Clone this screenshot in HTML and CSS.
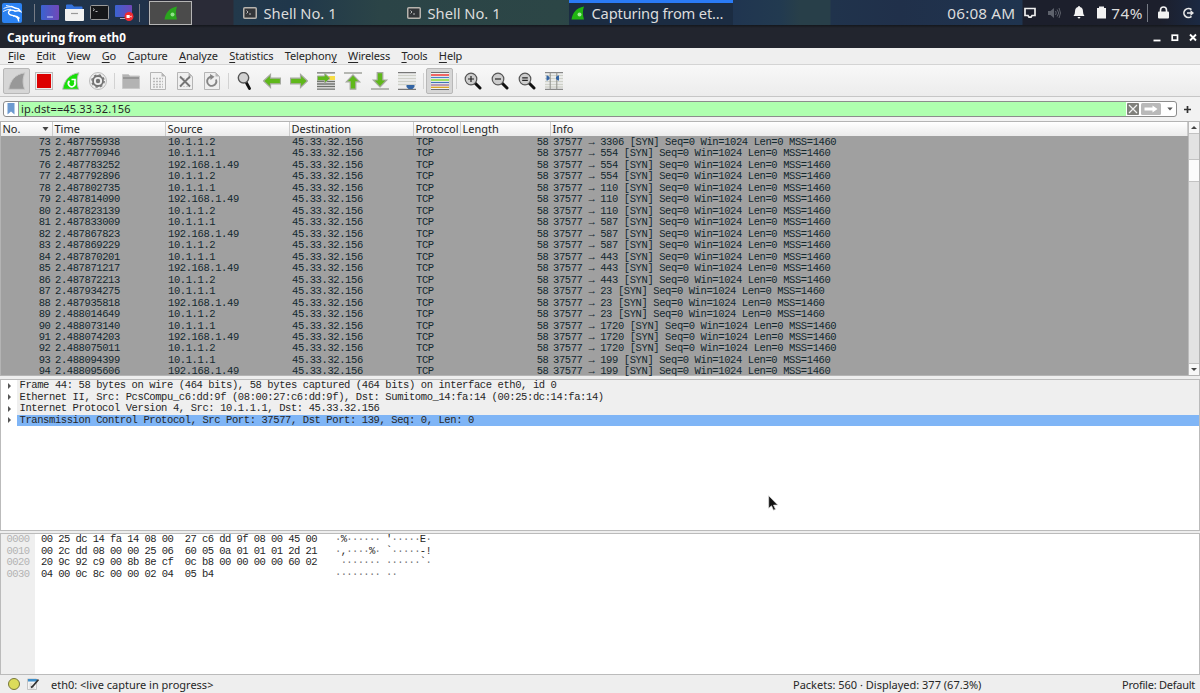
FILE: index.html
```html
<!DOCTYPE html>
<html lang="en">

<head>
    <meta charset="UTF-8">
    <meta name="viewport" content="width=device-width, initial-scale=1.0">
    <title>Capturing from eth0</title>
    <link rel="stylesheet" href="styles.css">
</head>

<body>
    <!-- desktop panel -->
    <div class="panel">
        <div class="launchers">
            <svg class="kali" width="20" height="20" viewBox="0 0 20 20">
                <rect width="20" height="20" rx="2" fill="#2b82f2" />
                <path d="M1.500 5.500 5 4.200l4-.5M1 8.500l4-1.700 4-.6M4 2.500l5 1" fill="none" stroke="#fff" stroke-width=".9" />
                <path d="M9 3.500c2 0 3 1.500 5 1.800l2.500.5 2 2.700-2.500-.8-3.500.5M13 8c-3-1.500-6.500-1-6.500 1.500 0 2.500 3 2.800 5.500 3.300 3 .7 4.500 2.500 4.700 5.700M11 13c3-.3 5 .5 6.500 2.500" fill="none" stroke="#fff" stroke-width="1.400" />
            </svg>
            <i class="line"></i>
            <svg width="18" height="15" viewBox="0 0 18 15">
                <defs>
                    <linearGradient id="desk" x1="0" y1="0" x2="1" y2="0">
                        <stop offset="0" stop-color="#3a63d0" />
                        <stop offset="1" stop-color="#7148b8" />
                    </linearGradient>
                </defs>
                <rect width="18" height="15" rx="1" fill="url(#desk)" />
                <path d="M6 12h6" stroke="#c9d4ff" stroke-width="1" />
            </svg>
            <svg width="19" height="17" viewBox="0 0 19 17">
                <path d="M1 6V1.500Q1 .5 2 .5h5l2 2h7.500q1 0 1 1V6z" fill="#3572dc" />
                <path d="M0 5h19v11q0 1-1 1H1q-1 0-1-1z" fill="#f1f1f1" />
                <path d="M6 9.500h7" stroke="#999" stroke-width="1.200" />
            </svg>
            <svg width="19" height="15" viewBox="0 0 19 15">
                <rect x=".5" y=".5" width="18" height="14" rx="1" fill="#161719" stroke="#9a9a9a" />
                <path d="M3 3.500l1.500 1.200L3 6M5.500 6.500h2" fill="none" stroke="#ddd" stroke-width=".8" />
            </svg>
            <svg width="19" height="17" viewBox="0 0 19 17">
                <rect y="1" width="17" height="12" rx="1" fill="url(#desk)" />
                <path d="M5 14.500h5" stroke="#aab" stroke-width="1" />
                <circle cx="14" cy="12.500" r="4.500" fill="#f02a30" />
                <path d="M11.500 11h3.200v3h-3.200zM15 12.500l1.500-1v2z" fill="#fff" />
            </svg>
            <i class="line last"></i>
        </div>
        <div class="workspace">
            <svg width="14" height="14" viewBox="0 0 14 14">
                <path d="M.5 13.500C1.500 7 5 2 13 .5c-1.500 4-1.500 8 0 13z" fill="#2aa51e" />
                <circle cx="8.500" cy="8.500" r="2" fill="#8fe08a" />
            </svg>
        </div>
        <div class="task">
            <svg width="14" height="12" viewBox="0 0 14 12">
                <rect x=".75" y=".75" width="12.500" height="10.500" rx="1" fill="#333639" stroke="#b7b4ae" stroke-width="1.500" />
                <path d="M3.500 3.500 5 5 3.500 6.500M6 7h2" fill="none" stroke="#ddd" stroke-width=".8" />
            </svg>
            <span>Shell No. 1</span>
        </div>
        <div class="task second">
            <svg width="14" height="12" viewBox="0 0 14 12">
                <rect x=".75" y=".75" width="12.500" height="10.500" rx="1" fill="#333639" stroke="#b7b4ae" stroke-width="1.500" />
                <path d="M3.500 3.500 5 5 3.500 6.500M6 7h2" fill="none" stroke="#ddd" stroke-width=".8" />
            </svg>
            <span>Shell No. 1</span>
        </div>
        <div class="task current">
            <svg width="14" height="14" viewBox="0 0 14 14">
                <path d="M.5 13.500C1.500 7 5 2 13 .5c-1.500 4-1.500 8 0 13z" fill="#20b512" />
                <circle cx="8.500" cy="8.500" r="2" fill="#a6eaa0" />
            </svg>
            <span>Capturing from et...</span>
        </div>
        <div class="tray">
            <span class="clock">06:08 AM</span>
            <svg class="t-net" width="12" height="12" viewBox="0 0 12 12">
                <path d="M1 1.500h10v7H8l-1 1.700H5L4 8.500H1z" fill="none" stroke="#eee" stroke-width="1.700" />
            </svg>
            <svg class="t-vol" width="13" height="12" viewBox="0 0 13 12">
                <path d="M0 4h2.500L6 1v10L2.500 8H0z" fill="#5e626c" />
                <path d="M7.500 4q1.500 2 0 4M9.200 2.500q3 3.500 0 7M11 1q3 5 0 10" fill="none" stroke="#5e626c" />
            </svg>
            <svg class="t-bell" width="12" height="13" viewBox="0 0 12 13">
                <path d="M6 0q1 0 1 1 3 .8 3 4.500 0 3 1.500 4.500H.5Q2 8.500 2 5.500 2 1.800 5 1q0-1 1-1zM4.500 11h3q-.5 1.500-1.500 1.500T4.500 11z" fill="#f2f2f2" />
            </svg>
            <svg class="t-bat" width="9" height="13" viewBox="0 0 9 13">
                <path d="M0 2h2V.5h5V2h2v10.500H0z" fill="#f2f2f2" />
            </svg>
            <span class="charge">74%</span>
            <i class="line"></i>
            <svg class="t-lock" width="11" height="13" viewBox="0 0 11 13">
                <rect y="5.500" width="11" height="7" rx="1" fill="#f2f2f2" />
                <path d="M2.500 6V4a3 3 0 0 1 6 0v2" fill="none" stroke="#f2f2f2" stroke-width="1.600" />
            </svg>
            <svg class="t-out" width="12" height="12" viewBox="0 0 12 12">
                <path d="M9.500 2.700A4.500 4.500 0 1 0 9.500 9.300M5 6h5" fill="none" stroke="#e8e8e8" stroke-width="1.700" />
                <path d="M8.500 3 12 6 8.500 9z" fill="#e8e8e8" />
            </svg>
        </div>
    </div>

    <div class="titlebar">
        <span>Capturing from eth0</span>
        <div class="win-btns">
            <svg width="8" height="9" viewBox="0 0 8 9"><path d="M.5 7.500h7" stroke="#fff" stroke-width="1.800" /></svg>
            <svg width="8" height="9" viewBox="0 0 8 9"><rect x="1.200" y="2.200" width="5.300" height="5" fill="none" stroke="#fff" stroke-width="1.700" /></svg>
            <svg width="8" height="9" viewBox="0 0 8 9"><path d="M1 1.500l6 6M7 1.500l-6 6" stroke="#fff" stroke-width="1.900" /></svg>
        </div>
    </div>

    <div class="menubar">
        <span><u>F</u>ile</span>
        <span><u>E</u>dit</span>
        <span><u>V</u>iew</span>
        <span><u>G</u>o</span>
        <span><u>C</u>apture</span>
        <span><u>A</u>nalyze</span>
        <span><u>S</u>tatistics</span>
        <span>Telephon<u>y</u></span>
        <span><u>W</u>ireless</span>
        <span><u>T</u>ools</span>
        <span><u>H</u>elp</span>
    </div>

    <div class="toolbar">
        <div class="tool pressed">
            <svg viewBox="0 0 18 18"><path d="M.7 17.300C2 9 7 2 17 .8c-2.500 5-2.500 11-.3 16.500z" fill="#989898" stroke="#c9c9c9" /></svg>
        </div>
        <div class="tool">
            <svg viewBox="0 0 18 18"><rect x=".5" y=".5" width="17" height="17" fill="#eee" stroke="#bbb" /><rect x="2" y="2" width="14" height="14" fill="#dc0000" /></svg>
        </div>
        <div class="tool">
            <svg viewBox="0 0 18 18"><path d="M.7 17.300C2 9 7 2 17 .8c-2.500 5-2.500 11-.3 16.500z" fill="#18e008" stroke="#bbb" /><path d="M7.500 9a3.300 3.300 0 1 0 5 .7M9.500 7.500h3.500v3.500" fill="none" stroke="#fff" stroke-width="1.700" /></svg>
        </div>
        <div class="tool">
            <svg viewBox="0 0 18 18"><circle cx="9" cy="9" r="8.500" fill="#eee" stroke="#bbb" /><circle cx="9" cy="9" r="5" fill="none" stroke="#737373" stroke-width="1.800" /><circle cx="9" cy="9" r="6.200" fill="none" stroke="#737373" stroke-width="1.300" stroke-dasharray="2.400 2.470" /><circle cx="9" cy="9" r="2.200" fill="#737373" /></svg>
        </div>
        <i class="sep"></i>
        <div class="tool">
            <svg viewBox="0 0 18 18"><path d="M.5 16.500v-14h6l1.500 1.500h9.500v12.500z" fill="#b3b3b3" stroke="#c8c8c8" /><path d="M1 6h16" stroke="#8b8b8b" stroke-width="1.500" /></svg>
        </div>
        <div class="tool">
            <svg viewBox="0 0 18 18"><path d="M1.500 .5h11l4 4v13h-15z" fill="#f2f2f2" stroke="#b5b5b5" /><path d="M12.500.5v4h4z" fill="#b5b5b5" /><path d="M4 6.500h10M4 9.500h10M4 12.500h10M4 15h10" stroke="#bababa" stroke-width="1.500" stroke-dasharray="2 1" /></svg>
        </div>
        <div class="tool">
            <svg viewBox="0 0 18 18"><path d="M1.500 .5h11l4 4v13h-15z" fill="#efefef" stroke="#b5b5b5" /><path d="M12.500.5v4h4z" fill="#b5b5b5" /><path d="M4 6.500h10M4 14.500h10" stroke="#ccc" stroke-dasharray="2 1" /><path d="M4 4.500l10 10M14 4.500l-10 10" stroke="#757575" stroke-width="1.900" /></svg>
        </div>
        <div class="tool">
            <svg viewBox="0 0 18 18"><path d="M1.500 .5h11l4 4v13h-15z" fill="#efefef" stroke="#b5b5b5" /><path d="M12.500.5v4h4z" fill="#b5b5b5" /><path d="M13 7.500a4.600 4.600 0 1 1-4.500-2.800" fill="none" stroke="#858585" stroke-width="1.900" /><path d="M7 2l4.500 2.700L7.500 8z" fill="#858585" /></svg>
        </div>
        <i class="sep"></i>
        <div class="tool">
            <svg viewBox="0 0 18 18"><path d="M10.500 11l3 5.500" stroke="#111" stroke-width="2.800" stroke-linecap="round" /><circle cx="7.500" cy="5.800" r="5.200" fill="#d2d2d2" stroke="#555" stroke-width="1.400" /></svg>
        </div>
        <div class="tool">
            <svg viewBox="0 0 18 18"><path d="M.5 9 7.500 2.500v3.700h10v5.600h-10v3.700z" fill="#5fb81a" stroke="#a5a99f" stroke-width="1.200" /></svg>
        </div>
        <div class="tool">
            <svg viewBox="0 0 18 18"><path d="M17.500 9l-7-6.500v3.700H.5v5.600h10v3.700z" fill="#5fb81a" stroke="#a5a99f" stroke-width="1.200" /></svg>
        </div>
        <div class="tool">
            <svg viewBox="0 0 18 18"><path d="M0 .8h18M0 9.500h18M0 12h18M0 14.500h18M0 17.200h18" stroke="#6f716d" stroke-width="1.300" /><path d="M10 4h8v4h-8z" fill="#f6dc45" /><path d="M13 6.300l-5.300-5v2.700H.3v4.600h7.400v2.700z" fill="#5fb81a" stroke="#a5a99f" /></svg>
        </div>
        <div class="tool">
            <svg viewBox="0 0 18 18"><path d="M0 1h18" stroke="#a5a8a2" stroke-width="1.600" /><path d="M9 2.800l6.700 7h-3.900v7.400H6.200V9.800H2.300z" fill="#5fb81a" stroke="#a5a99f" stroke-width="1.200" /></svg>
        </div>
        <div class="tool">
            <svg viewBox="0 0 18 18"><path d="M0 17h18" stroke="#a5a8a2" stroke-width="1.600" /><path d="M9 15l6.700-7h-3.900V.7H6.200V8H2.300z" fill="#5fb81a" stroke="#a5a99f" stroke-width="1.200" /></svg>
        </div>
        <div class="tool">
            <svg viewBox="0 0 18 18"><path d="M0 3.500h18M0 6.500h18M0 9.500h18M0 12.500h18" stroke="#cfd1c9" stroke-width="1.300" /><path d="M0 .7h18M0 17.300h18" stroke="#777" stroke-width="1.300" /><path d="M8.500 13h8v2l-2 2h-4l-2-2z" fill="#3465a4" /></svg>
        </div>
        <i class="sep"></i>
        <div class="tool pressed">
            <svg viewBox="0 0 18 18"><path d="M0 0h18v18H0z" fill="#f1f1ee" /><path d="M0 .5h18M0 17.500h18" stroke="#707070" /><path d="M0 3h18" stroke="#ef2929" stroke-width="1.400" /><path d="M0 5.500h18" stroke="#4a7fc4" stroke-width="1.200" /><path d="M0 8h18" stroke="#7ddc28" stroke-width="1.400" /><path d="M0 10.500h18" stroke="#3f74b8" stroke-width="1.200" /><path d="M0 13h18" stroke="#9a73a5" stroke-width="1.400" /><path d="M0 15.300h18" stroke="#d9a01e" stroke-width="1.300" /></svg>
        </div>
        <i class="sep"></i>
        <div class="tool">
            <svg viewBox="0 0 18 18"><path d="M11 11l5 5" stroke="#111" stroke-width="3" stroke-linecap="round" /><circle cx="7" cy="7" r="5.800" fill="#cdcdcd" stroke="#555" stroke-width="1.200" /><path d="M4 7h6M7 4v6" stroke="#222" stroke-width="1.200" /></svg>
        </div>
        <div class="tool">
            <svg viewBox="0 0 18 18"><path d="M11 11l5 5" stroke="#111" stroke-width="3" stroke-linecap="round" /><circle cx="7" cy="7" r="5.800" fill="#cdcdcd" stroke="#555" stroke-width="1.200" /><path d="M4 7h6" stroke="#222" stroke-width="1.200" /></svg>
        </div>
        <div class="tool">
            <svg viewBox="0 0 18 18"><path d="M11 11l5 5" stroke="#111" stroke-width="3" stroke-linecap="round" /><circle cx="7" cy="7" r="5.800" fill="#cdcdcd" stroke="#555" stroke-width="1.200" /><path d="M4.200 5.800h5.600M4.200 8.300h5.600" stroke="#222" stroke-width="1.200" /></svg>
        </div>
        <div class="tool">
            <svg viewBox="0 0 18 18"><path d="M0 3.500h18M0 6.500h18M0 9.500h18M0 12.500h18M0 15h18" stroke="#cfd1c9" stroke-width="1.300" /><path d="M0 .7h18M0 17.300h18" stroke="#888" stroke-width="1.300" /><path d="M5.200 0v18M11.800 0v18" stroke="#8d8f8a" stroke-width="1" /><path d="M1.500 3.500h1l2 1.500v2l-2 1.500h-1zM14 3.500h-1L11 5v2l2 1.500h1z" fill="#3465a4" /></svg>
        </div>
    </div>

    <div class="filterbar">
        <div class="filter">
            <div class="bookmark">
                <svg width="8" height="12" viewBox="0 0 8 12"><path d="M.5 0h7v11.500L4 8.500.5 11.500z" fill="#6d9ad0" /></svg>
            </div>
            <div class="expr">ip.dst==45.33.32.156</div>
            <svg class="f-clear" width="12" height="12" viewBox="0 0 12 12"><rect width="12" height="12" rx="1" fill="#80807b" /><path d="M2 2l8 8M10 2l-8 8" stroke="#f2f2f2" stroke-width="1.200" /></svg>
            <svg class="f-apply" width="20" height="12" viewBox="0 0 20 12"><rect width="20" height="12" rx="1.500" fill="#b9b9b9" /><path d="M3.500 4.500h8V2.500L16.500 6l-5 3.500v-2h-8z" fill="#fff" /></svg>
            <svg width="6" height="4" viewBox="0 0 6 4"><path d="M.3.500h5.400L3 3.500z" fill="#555" /></svg>
        </div>
        <svg class="f-add" width="7" height="7" viewBox="0 0 7 7"><path d="M3.500 0v7M0 3.500h7" stroke="#333" stroke-width="1.700" /></svg>
    </div>

    <div class="packets">
        <div class="list">
            <div class="thead">
                <span class="no">No.<svg width="7" height="4" viewBox="0 0 7 4"><path d="M.5 0h6L3.500 4z" fill="#444" /></svg></span>
                <span>Time</span>
                <span>Source</span>
                <span>Destination</span>
                <span>Protocol</span>
                <span>Length</span>
                <span>Info</span>
            </div>
            <div class="tbody"></div>
        </div>
        <div class="scroll">
            <div class="arrow"><svg width="6" height="3" viewBox="0 0 6 3"><path d="M0 3h6L3 0z" fill="#444" /></svg></div>
            <div class="track">
                <div class="thumb"></div>
            </div>
            <div class="arrow"><svg width="6" height="3" viewBox="0 0 6 3"><path d="M0 0h6L3 3z" fill="#444" /></svg></div>
        </div>
    </div>

    <div class="details">
        <div class="node"><i></i><span>Frame 44: 58 bytes on wire (464 bits), 58 bytes captured (464 bits) on interface eth0, id 0</span></div>
        <div class="node"><i></i><span>Ethernet II, Src: PcsCompu_c6:dd:9f (08:00:27:c6:dd:9f), Dst: Sumitomo_14:fa:14 (00:25:dc:14:fa:14)</span></div>
        <div class="node"><i></i><span>Internet Protocol Version 4, Src: 10.1.1.1, Dst: 45.33.32.156</span></div>
        <div class="node selected"><i></i><span>Transmission Control Protocol, Src Port: 37577, Dst Port: 139, Seq: 0, Len: 0</span></div>
    </div>

    <div class="bytes"></div>

    <div class="statusbar">
        <i class="expert"></i>
        <svg width="12" height="12" viewBox="0 0 12 12">
            <path d="M.5 1h9v10.500h-9z" fill="#f4f4f4" stroke="#c5c5c5" />
            <path d="M1 1h9v2.500H1z" fill="#3f8fc9" />
            <path d="M2.500 6h3M2.500 8h4M2.500 10h5" stroke="#ccc" />
            <path d="M11.500 1.500 5.500 8.500l-1.500 1" fill="none" stroke="#333" stroke-width="1.700" />
        </svg>
        <span class="iface">eth0: &lt;live capture in progress&gt;</span>
        <span class="count">Packets: 560 · Displayed: 377 (67.3%)</span>
        <span class="profile">Profile: Default</span>
    </div>

    <svg class="cursor" width="11" height="16" viewBox="0 0 11 16">
        <path d="M.7.700v12.600l2.800-2.500 2 4.500 2-1-2-4.200h4.300z" fill="#111" stroke="#ddd" stroke-width=".7" />
    </svg>

    <script src="script.js"></script>
</body>

</html>
```
FILE: styles.css
```css
* {
    margin: 0;
    padding: 0;
    box-sizing: border-box;
}

body {
    display: flex;
    flex-direction: column;
    width: 1200px;
    height: 693px;
    overflow: hidden;
    background-color: #eee;
    font-family: "Noto Sans", sans-serif;
    font-size: 11px;
    color: #262626;
    white-space: nowrap;
}

svg {
    display: block;
    flex: none;
}

i {
    display: block;
    flex: none;
}

/* panel */
.panel {
    display: flex;
    height: 25px;
    background: linear-gradient(90deg, #22364b 0, #20324a 148px, #2a2b37 149px, #2a2b37 233px, #22394b 234px, #20374b 290px, #2b4447 380px, #2c4646 560px, #203550 733px, #223a50 780px, #283f49 800px, #283f49 830px, #20334c 831px, #20304a 900px, #1f344f 1022px, #1c1f2c 1023px, #1c1f2c 1160px, #1b2942 1200px);
    color: #dcdcdc;
    font-size: 14.700px;
}

.launchers {
    display: flex;
    align-items: center;
    width: 149px;
    padding-left: 2px;
    gap: 6px;
}

.kali {
    margin-right: 6px;
}

.line {
    width: 1px;
    height: 18px;
    background-color: #777c85;
}

.launchers .last {
    margin-left: -1px;
}

.workspace {
    display: flex;
    align-items: center;
    justify-content: center;
    width: 43px;
    height: 24px;
    margin-top: 1px;
    border: 1px solid #b5b5b5;
    background-color: #4b4b4b;
}

.task {
    display: flex;
    align-items: center;
    width: 164px;
    margin-left: 42px;
    padding-left: 9px;
}

.task span {
    margin-left: 6.500px;
}

.second {
    margin-left: 0;
}

.current {
    height: 25px;
    margin-left: 7px;
    padding-left: 2px;
    border-top: 3px solid #2a7bf6;
    background-color: #1b2c42;
    letter-spacing: -0.180px;
}

.current span {
    margin-top: -3px;
}

.current svg {
    margin-top: -2px;
}

.tray {
    display: flex;
    align-items: center;
    margin-left: auto;
    padding-right: 6px;
    font-size: 15.300px;
}

.clock {
    letter-spacing: 0.150px;
}

.t-net {
    margin-left: 9px;
}

.t-vol {
    margin-left: 12px;
}

.t-bell {
    margin-left: 12px;
}

.t-bat {
    margin-left: 12px;
}

.charge {
    margin-left: 5px;
    letter-spacing: 0.500px;
}

.tray .line {
    margin-left: 4px;
}

.t-lock {
    margin-left: 10px;
}

.t-out {
    margin-left: 13px;
}

/* title */
.titlebar {
    display: flex;
    align-items: center;
    justify-content: space-between;
    height: 23px;
    padding: 1px 3px 0 7px;
    background: linear-gradient(#14171c, #22252e 3px, #22252e);
    color: #fff;
    font-size: 11.700px;
    font-weight: bold;
}

.win-btns {
    display: flex;
    gap: 10px;
}

/* menu */
.menubar {
    display: flex;
    align-items: center;
    height: 17px;
    padding: 0 0 1px 8px;
    border-bottom: 1px solid #d4d4d4;
    background-color: #efefef;
    gap: 11.400px;
    letter-spacing: -0.150px;
}

.menubar u {
    text-underline-offset: 2px;
    text-decoration-thickness: 1px;
}

/* tools */
.toolbar {
    display: flex;
    align-items: center;
    height: 32px;
    padding-left: 3px;
    border-bottom: 1px solid #c6c6c6;
    background: linear-gradient(#f8f8f8, #ececec);
}

.tool {
    display: flex;
    align-items: center;
    justify-content: center;
    width: 27px;
    height: 26px;
}

.tool svg {
    width: 18px;
    height: 18px;
}

.pressed {
    border: 1px solid #b8b8b8;
    border-radius: 2px;
    background-color: #d6d6d6;
}

.sep {
    width: 1px;
    height: 16px;
    margin: 0 2.500px;
    background-color: #d2d2d2;
}

/* display filter */
.filterbar {
    display: flex;
    align-items: center;
    height: 24px;
    padding-left: 3px;
    background-color: #f2f2f2;
}

.filter {
    display: flex;
    align-items: center;
    width: 1174px;
    height: 16px;
    padding-right: 3px;
    border: 1px solid #8c8c8c;
    border-radius: 3px;
    background-color: #fff;
}

.bookmark {
    display: flex;
    align-items: center;
    justify-content: center;
    width: 15px;
    height: 14px;
    border-right: 1px solid #999;
}

.expr {
    flex: 1;
    height: 14px;
    padding-left: 2px;
    background-color: #afffaf;
    letter-spacing: 0.150px;
    line-height: 14px;
}

.f-clear {
    margin-left: 1px;
}

.f-apply {
    margin: 0 6px 0 2px;
}

.f-add {
    margin-left: 7px;
}

/* packet list */
.packets {
    display: flex;
    height: 255px;
    border: 1px solid #b4b4b4;
}

.list {
    display: flex;
    flex-direction: column;
    width: 1187px;
    background-color: #a0a0a0;
}

.thead,
.row {
    display: grid;
    grid-template-columns: 52px 113px 124px 124px 47px 90px 1fr;
}

.thead {
    height: 14px;
    background: linear-gradient(#fff, #ebebeb);
}

.thead span {
    padding-left: 1.500px;
    border-right: 1px solid #ccc;
    line-height: 14px;
}

.thead .no {
    display: flex;
    align-items: center;
    justify-content: space-between;
    padding-right: 3px;
}

.tbody {
    padding-top: 1px;
}

.row,
.node,
.bytes {
    font-family: "Liberation Mono", monospace;
    font-size: 10.500px;
    letter-spacing: -0.400px;
}

.row {
    height: 11.480px;
    color: #12272e;
    line-height: 11.480px;
}

.row span {
    padding-left: 2px;
}

.row .num {
    padding: 0 2.500px 0 0;
    text-align: right;
}

.scroll {
    display: flex;
    flex-direction: column;
    width: 11px;
    border-left: 1px solid #bbb;
}

.arrow {
    display: flex;
    align-items: center;
    justify-content: center;
    height: 11px;
    background-color: #f8f8f8;
}

.track {
    flex: 1;
    padding-top: 25px;
    border: 1px solid #c2c2c2;
    border-width: 1px 0;
    background-color: #e2e2e2;
}

.thumb {
    height: 23px;
    border: 1px solid #c2c2c2;
    border-width: 1px 0;
    background-color: #fbfbfb;
}

/* packet details */
.details {
    height: 152px;
    margin-top: 3px;
    border: 1px solid #bbb;
    background-color: #fff;
}

.node {
    display: flex;
    align-items: center;
    height: 11.550px;
}

.node i {
    width: 0;
    height: 0;
    margin: 0 6px 0 7px;
    border-left: 3.500px solid #555;
    border-top: 3px solid transparent;
    border-bottom: 3px solid transparent;
}

.node span {
    flex: 1;
    padding-left: 2.500px;
    background-color: #efefef;
    line-height: 11.550px;
}

.node.selected span {
    background-color: #7fb5f6;
}

/* packet bytes */
.bytes {
    height: 142px;
    margin-top: 2px;
    border: 1px solid #bbb;
    background: linear-gradient(90deg, #efefef 34px, #fff 34px);
    letter-spacing: -0.550px;
}

.hex {
    display: flex;
    height: 11.550px;
    line-height: 11.550px;
    white-space: pre;
}

.hex .offset {
    width: 40px;
    padding-left: 5.500px;
    color: #b3b3b3;
}

.hex .data {
    width: 294px;
}

.hex .ascii {
    letter-spacing: -0.650px;
}

.hex b {
    color: #777;
    font-weight: normal;
}

/* status */
.statusbar {
    display: flex;
    flex: 1;
    align-items: center;
    padding-left: 8px;
}

.expert {
    width: 12px;
    height: 12px;
    margin-right: 7px;
    border: 1px solid #77773a;
    border-radius: 50%;
    background-color: #dcdc5a;
}

.iface {
    width: 754px;
    padding-left: 12px;
}

.profile {
    margin-left: auto;
    padding-right: 5px;
    letter-spacing: -0.250px;
}

.cursor {
    position: absolute;
    left: 768px;
    top: 495px;
}
```
FILE: script.js
```js
// no, time, source, destination port
var packets = [
    [73, "2.487755938", "10.1.1.2", 3306],
    [75, "2.487770946", "10.1.1.1", 554],
    [76, "2.487783252", "192.168.1.49", 554],
    [77, "2.487792896", "10.1.1.2", 554],
    [78, "2.487802735", "10.1.1.1", 110],
    [79, "2.487814090", "192.168.1.49", 110],
    [80, "2.487823139", "10.1.1.2", 110],
    [81, "2.487833009", "10.1.1.1", 587],
    [82, "2.487867823", "192.168.1.49", 587],
    [83, "2.487869229", "10.1.1.2", 587],
    [84, "2.487870201", "10.1.1.1", 443],
    [85, "2.487871217", "192.168.1.49", 443],
    [86, "2.487872213", "10.1.1.2", 443],
    [87, "2.487934275", "10.1.1.1", 23],
    [88, "2.487935818", "192.168.1.49", 23],
    [89, "2.488014649", "10.1.1.2", 23],
    [90, "2.488073140", "10.1.1.1", 1720],
    [91, "2.488074203", "192.168.1.49", 1720],
    [92, "2.488075011", "10.1.1.2", 1720],
    [93, "2.488094399", "10.1.1.1", 199],
    [94, "2.488095606", "192.168.1.49", 199]
];

var html = "";
packets.forEach(function (p) {
    html += '<div class="row"><span class="num">' + p[0] + "</span><span>" + p[1] + "</span><span>" + p[2] +
        "</span><span>45.33.32.156</span><span>TCP</span><span class=\"num\">58</span><span>37577 → " + p[3] +
        " [SYN] Seq=0 Win=1024 Len=0 MSS=1460</span></div>";
});
document.querySelector(".tbody").innerHTML = html;

var dump = [
    "00 25 dc 14 fa 14 08 00  27 c6 dd 9f 08 00 45 00",
    "00 2c dd 08 00 00 25 06  60 05 0a 01 01 01 2d 21",
    "20 9c 92 c9 00 8b 8e cf  0c b8 00 00 00 00 60 02",
    "04 00 0c 8c 00 00 02 04  05 b4"
];

// printable bytes as they are, the others as a grey dot
function toAscii(line) {
    return line.split("  ").map(function (half) {
        return half.split(" ").map(function (h) {
            var n = parseInt(h, 16);
            return n >= 32 && n < 127 ? String.fromCharCode(n) : "<b>·</b>";
        }).join("");
    }).join(" ");
}

html = "";
dump.forEach(function (line, i) {
    html += '<div class="hex"><span class="offset">00' + i + '0</span><span class="data">' + line +
        '</span><span class="ascii">' + toAscii(line) + "</span></div>";
});
document.querySelector(".bytes").innerHTML = html;
```
